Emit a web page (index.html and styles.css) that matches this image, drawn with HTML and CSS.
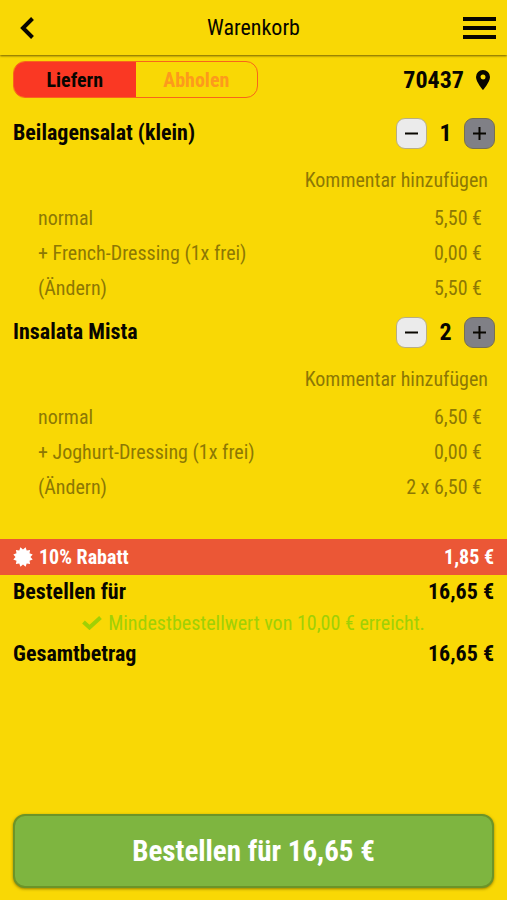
FILE: index.html
```html
<!DOCTYPE html>
<html lang="de">
<head>
<meta charset="utf-8">
<meta name="viewport" content="width=device-width, initial-scale=1">
<title>Warenkorb</title>
<link rel="stylesheet" href="styles.css">
</head>
<body>
<header class="topbar">
  <button class="icon-button" type="button" aria-label="Zurück">
    <svg width="16" height="24" viewBox="0 0 16 24"><path d="M14.500 2.500 5 12l9.500 9.500" fill="none" stroke="currentColor" stroke-width="4"/></svg>
  </button>
  <h1 class="title">Warenkorb</h1>
  <button class="icon-button menu" type="button" aria-label="Menü">
    <svg width="34" height="24" viewBox="0 0 34 24"><path d="M0 3h33M0 12h33M0 21h33" fill="none" stroke="currentColor" stroke-width="4"/></svg>
  </button>
</header>
<main>
  <div class="delivery">
    <div class="toggle">
      <button class="toggle-option active" type="button" aria-pressed="true">Liefern</button>
      <button class="toggle-option" type="button" aria-pressed="false">Abholen</button>
    </div>
    <a class="zip" href="#">70437
      <svg width="14" height="20" viewBox="0 0 14 20"><path d="M7 0a7 7 0 0 0-7 7c0 5 7 13 7 13s7-8 7-13a7 7 0 0 0-7-7zm0 4.500a2.500 2.500 0 1 1 0 5 2.500 2.500 0 0 1 0-5z" fill="currentColor" fill-rule="evenodd"/></svg>
    </a>
  </div>

  <section class="item">
    <div class="item-head">
      <h2 class="strong">Beilagensalat (klein)</h2>
      <div class="stepper">
        <button class="step" type="button" aria-label="Weniger"><svg width="13" height="13" viewBox="0 0 13 13"><path d="M0 6.500h13" stroke="currentColor" stroke-width="2"/></svg></button>
        <span class="count">1</span>
        <button class="step plus" type="button" aria-label="Mehr"><svg width="13" height="13" viewBox="0 0 13 13"><path d="M0 6.500h13M6.500 0v13" stroke="currentColor" stroke-width="2"/></svg></button>
      </div>
    </div>
    <a class="comment" href="#">Kommentar hinzufügen</a>
    <div class="line"><span>normal</span><span>5,50 €</span></div>
    <div class="line"><span>+ French-Dressing (1x frei)</span><span>0,00 €</span></div>
    <div class="line"><a href="#">(Ändern)</a><span>5,50 €</span></div>
  </section>

  <section class="item">
    <div class="item-head">
      <h2 class="strong">Insalata Mista</h2>
      <div class="stepper">
        <button class="step" type="button" aria-label="Weniger"><svg width="13" height="13" viewBox="0 0 13 13"><path d="M0 6.500h13" stroke="currentColor" stroke-width="2"/></svg></button>
        <span class="count">2</span>
        <button class="step plus" type="button" aria-label="Mehr"><svg width="13" height="13" viewBox="0 0 13 13"><path d="M0 6.500h13M6.500 0v13" stroke="currentColor" stroke-width="2"/></svg></button>
      </div>
    </div>
    <a class="comment" href="#">Kommentar hinzufügen</a>
    <div class="line"><span>normal</span><span>6,50 €</span></div>
    <div class="line"><span>+ Joghurt-Dressing (1x frei)</span><span>0,00 €</span></div>
    <div class="line"><a href="#">(Ändern)</a><span>2 x 6,50 €</span></div>
  </section>

  <section class="summary">
    <div class="discount">
      <svg width="20" height="20" viewBox="-10 -10 20 20"><path d="M0-7.500 2.600-9.700 3.700-6.500 7.100-7.100 6.500-3.700 9.700-2.600 7.500 0 9.700 2.600 6.500 3.700 7.100 7.100 3.700 6.500 2.600 9.700 0 7.500-2.600 9.700-3.700 6.500-7.100 7.100-6.500 3.700-9.700 2.600-7.500 0-9.700-2.600-6.500-3.700-7.100-7.100-3.700-6.500-2.600-9.700z" fill="currentColor"/></svg>
      <span class="grow">10% Rabatt</span><span>1,85 €</span>
    </div>
    <div class="total strong"><span>Bestellen für</span><span>16,65 €</span></div>
    <p class="minimum">
      <svg width="20" height="14" viewBox="0 0 20 14"><path d="m1.500 6 6 5.500L18.500 1.500" fill="none" stroke="currentColor" stroke-width="4"/></svg>
      Mindestbestellwert von 10,00 € erreicht.
    </p>
    <div class="total strong"><span>Gesamtbetrag</span><span>16,65 €</span></div>
  </section>
</main>
<footer class="footer">
  <button class="order" type="button">Bestellen für 16,65 €</button>
</footer>
</body>
</html>
```
FILE: styles.css
```css
* { box-sizing: border-box; }

body {
  margin: 0;
  min-height: 100vh;
  display: flex;
  flex-direction: column;
  background: #f9d805;
  color: #080600;
  font-family: "Roboto Condensed", Roboto, sans-serif;
  font-size: 20px;
  line-height: 24px;
}

button { font: inherit; color: inherit; cursor: pointer; }
a { color: inherit; text-decoration: none; }
svg { display: block; flex: none; }

.topbar {
  display: grid;
  grid-template-columns: 1fr auto 1fr;
  align-items: center;
  height: 55px;
  padding: 0 10px;
  box-shadow: 0 1px 2px rgba(80, 65, 0, .8);
}
.icon-button { padding: 0 8px; border: 0; background: none; justify-self: start; }
.icon-button.menu { padding: 0; justify-self: end; }
.title { margin: 0; font-size: 22px; font-weight: 400; }

.delivery {
  display: flex;
  justify-content: space-between;
  align-items: center;
  padding: 6px 17px 8px 13px;
}
.toggle {
  display: flex;
  flex: 0 1 245px;
  height: 37px;
  border: 1px solid #f8651b;
  border-radius: 12px;
  overflow: hidden;
}
.toggle-option {
  flex: 1;
  padding: 0;
  border: 0;
  background: none;
  color: #fd9a1c;
  font-weight: 700;
}
.toggle-option.active { background: #fa3823; color: #080600; }
.zip { display: flex; align-items: center; gap: 12px; font-size: 24px; font-weight: 700; }

.strong { margin: 0; font-size: 22px; font-weight: 700; }
.item-head {
  display: flex;
  justify-content: space-between;
  align-items: center;
  height: 54px;
  padding: 0 12px 0 13px;
}
.stepper { display: flex; align-items: center; }
.step {
  display: grid;
  place-items: center;
  width: 31px;
  height: 31px;
  padding: 0;
  border: 1px solid #b9ae83;
  border-radius: 9px;
  background: #ebebeb;
}
.step.plus { border-color: #77704f; background: #808086; }
.count { width: 37px; text-align: center; font-size: 24px; font-weight: 700; }
.comment {
  display: block;
  padding: 8px 19px 8px 13px;
  color: #8d7804;
  text-align: right;
}
.line {
  display: flex;
  justify-content: space-between;
  align-items: center;
  height: 35px;
  padding: 0 25px 0 38px;
  color: #8d7804;
}

.summary { padding-top: 35px; }
.discount {
  display: flex;
  align-items: center;
  gap: 6px;
  height: 36px;
  padding: 0 13px;
  background: #eb5736;
  color: #fff;
  font-weight: 700;
}
.grow { flex: 1; }
.total { display: flex; justify-content: space-between; padding: 5px 13px; }
.minimum {
  display: flex;
  justify-content: center;
  align-items: center;
  gap: 6px;
  margin: 0;
  padding: 2px 13px;
  color: #a0d005;
}

.footer { margin-top: auto; padding: 12px 13px; }
.order {
  display: block;
  width: 100%;
  height: 74px;
  border: 2px solid #6c9429;
  border-radius: 12px;
  background: #7eb540;
  box-shadow: 0 1px 3px rgba(80, 65, 0, .6);
  color: #fff;
  font-size: 29px;
  font-weight: 700;
}
```
